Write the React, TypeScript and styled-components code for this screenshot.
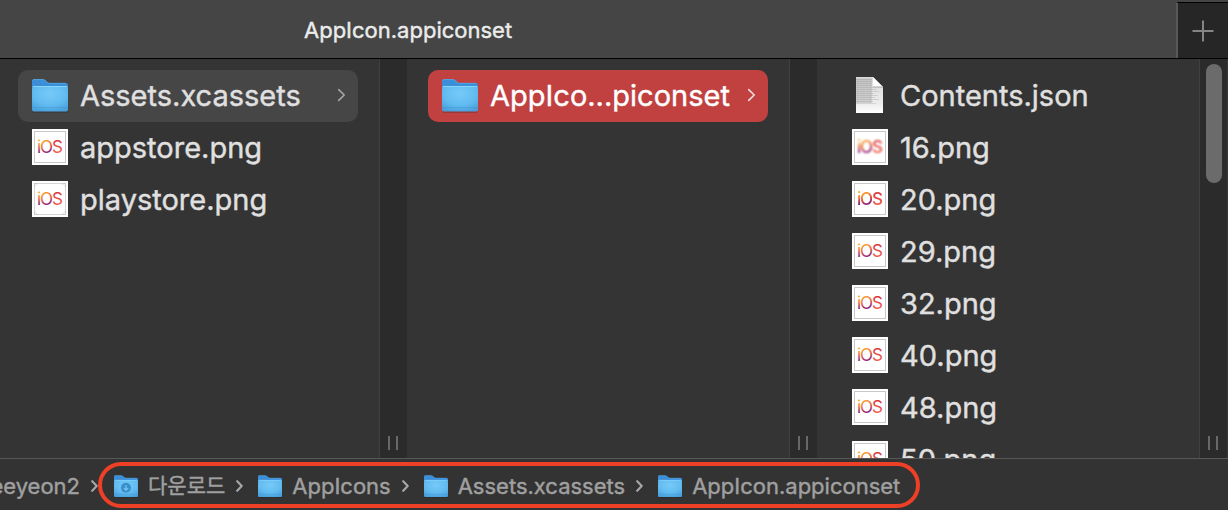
import React from 'react';
import styled, { createGlobalStyle } from 'styled-components';

const GlobalStyle = createGlobalStyle`
  * { box-sizing: border-box; }
  body {
    margin: 0;
    background: #333333;
    font-family: Inter, "Noto Sans CJK KR", sans-serif;
    -webkit-text-stroke: 0.4px currentColor;
  }
  button { font: inherit; color: inherit; background: none; border: 0; padding: 0; margin: 0; }
`;

const Window = styled.div`
  display: flex;
  flex-direction: column;
  height: 100vh;
  overflow: hidden;
`;

const TabBar = styled.header`
  display: flex;
  flex: none;
  height: 59px;
  background: #444544;
  border-bottom: 1px solid #000000;
`;

const TabTitle = styled.h1`
  flex: 1;
  margin: 0;
  padding: 1px 0 0 304px;
  font-size: 22px;
  line-height: 58px;
  font-weight: 400;
  color: #ececec;
  white-space: nowrap;
`;

const NewTab = styled.button`
  width: 52px;
  height: 56px;
  margin-top: 2px;
  display: flex;
  align-items: center;
  justify-content: center;
  background: #262626;
  border-left: 2px solid #585858;
  border-top: 1px solid #000000;
`;

const Columns = styled.main`
  flex: 1;
  min-height: 0;
  display: grid;
  grid-template-columns: 407fr 410fr 411fr;
  grid-template-rows: 100%;
`;

const Column = styled.section`
  display: flex;
  min-width: 0;
  background: #343434;
`;

const FileList = styled.ul<{ $inset: number }>`
  flex: 1;
  min-width: 0;
  margin: 0;
  padding: 11px 21px 0 ${(p) => p.$inset}px;
  list-style: none;
  overflow: hidden;
`;

const FileRow = styled.button<{ $tone?: 'muted' | 'accent' }>`
  display: flex;
  align-items: center;
  gap: 12px;
  width: 100%;
  height: 52px;
  padding: 0 12px 2px 14px;
  border-radius: 10px;
  text-align: left;
  color: ${(p) => (p.$tone === 'accent' ? '#ffffff' : '#e0e0e0')};
  background: ${(p) =>
    p.$tone === 'accent' ? '#c04140' : p.$tone === 'muted' ? '#464646' : 'transparent'};
`;

const FileName = styled.span`
  flex: 1;
  padding-top: 2px;
  font-size: 29px;
  line-height: 36px;
  white-space: nowrap;
`;

const Gutter = styled.div<{ $last?: boolean }>`
  flex: none;
  display: flex;
  flex-direction: column;
  align-items: center;
  justify-content: space-between;
  width: ${(p) => (p.$last ? 29 : 28)}px;
  padding: 5px 0 8px;
  background: #2b2b2b;
  border-left: 1px solid #404040;
  border-right: ${(p) => (p.$last ? '1px solid #383838' : 'none')};
`;

const Thumb = styled.div`
  width: 16px;
  height: 119px;
  margin-left: 1px;
  border-radius: 8px;
  background: #6b6b6b;
`;

const Grip = styled.div`
  width: 10px;
  height: 14px;
  margin-top: auto;
  margin-right: 1px;
  border: solid #686868;
  border-width: 0 2px;
`;

const PathBar = styled.nav`
  flex: none;
  display: flex;
  align-items: center;
  height: 52px;
  border-top: 1px solid #585858;
  background: #333333;
  color: #a0a0a0;
  font-size: 22px;
  line-height: 28px;
  white-space: nowrap;
`;

const Home = styled.div`
  display: flex;
  align-items: center;
  gap: 11px;
  padding-top: 2px;
`;

const HomeCrumb = styled.button`
  display: flex;
  justify-content: flex-end;
  width: 80px;
  overflow: hidden;
`;

const Trail = styled.div`
  display: flex;
  align-items: center;
  height: 46px;
  padding: 2px 16px 0 12px;
  border: 4px solid #ee4026;
  border-radius: 23px;
`;

const Crumb = styled.button`
  display: flex;
  align-items: center;
  gap: 10px;

  :lang(ko) {
    font-size: 21px;
  }
`;

const Separator = styled.span`
  display: flex;
  margin: 0 15px 0 11px;
`;

const Chevron = ({ color, thick }: { color: string; thick?: boolean }) =>
  thick ? (
    <svg width="7" height="12" viewBox="0 0 7 12" fill="none" aria-hidden="true">
      <path d="M1.2 1.2 5.7 6 1.2 10.8" stroke={color} strokeWidth="2.1" strokeLinecap="round" strokeLinejoin="round" />
    </svg>
  ) : (
    <svg width="9" height="14" viewBox="0 0 9 14" fill="none" aria-hidden="true">
      <path d="M1.7 1.6 7.2 7 1.7 12.4" stroke={color} strokeWidth="1.6" strokeLinecap="round" strokeLinejoin="round" />
    </svg>
  );

const FolderIcon = ({ size, download }: { size: number; download?: boolean }) => {
  const id = `folder-${size}${download ? '-d' : ''}`;
  return (
    <svg width={size} height={size} viewBox="0 -1 36 36" aria-hidden="true">
      <defs>
        <radialGradient id={id} cx="0.5" cy="0.3" r="0.75">
          <stop offset="0" stopColor="#76caf8" />
          <stop offset="0.6" stopColor="#62bbf0" />
          <stop offset="1" stopColor="#49a0dc" />
        </radialGradient>
      </defs>
      <path d="M0 3.3Q0 1.2 2 1.2H10.4Q12 1.2 13 2.1L15 4Q16.2 5 17.8 5H34Q36 5 36 7V12H0Z" fill="#3b8fd8" />
      <path d="M.4 2.8Q.8 1.5 2 1.5H10.4Q12 1.5 13 2.4L15 4.3Q16.2 5.3 17.8 5.3H34" fill="none" stroke="#54a9e6" strokeWidth=".8" />
      <path d="M1 34H35" stroke="#222222" strokeOpacity=".5" strokeWidth="1.2" />
      <rect y="8" width="36" height="25.4" rx="1.8" fill={`url(#${id})`} />
      <path d="M1 8.5H35" stroke="#8ad6fb" strokeWidth="1" />
      <path d="M0 29.6H36" stroke="#3d93d0" strokeOpacity=".4" strokeWidth="1" />
      {download && (
        <g fill="none">
          <circle cx="18" cy="19.5" r="7.5" fill="#398fca" />
          <path d="M18 15.5V23M14.8 20.2 18 23.4 21.2 20.2" stroke="#73c5f2" strokeWidth="1.8" />
        </g>
      )}
    </svg>
  );
};

const ImageIcon = ({ id, soft = 0, rounded }: { id: string; soft?: number; rounded?: boolean }) => (
  <svg width="36" height="36" viewBox="0 0 36 36" aria-hidden="true">
    <defs>
      <linearGradient id={`${id}-i`} x1="0" y1="0" x2="0" y2="1">
        <stop offset="0.25" stopColor="#f6b43c" />
        <stop offset="0.5" stopColor="#e0604a" />
        <stop offset="0.75" stopColor="#7a2382" />
      </linearGradient>
      <linearGradient id={`${id}-o`} x1="0.35" y1="0.15" x2="0.55" y2="0.85">
        <stop offset="0.15" stopColor="#f49a35" />
        <stop offset="0.5" stopColor="#e4573f" />
        <stop offset="0.85" stopColor="#8f2478" />
      </linearGradient>
      <linearGradient id={`${id}-s`} x1="0" y1="0" x2="0" y2="1">
        <stop offset="0.2" stopColor="#d93a3c" />
        <stop offset="0.8" stopColor="#f2604d" />
      </linearGradient>
      <filter id={`${id}-f`}>
        <feGaussianBlur stdDeviation={soft} />
      </filter>
    </defs>
    <rect width="36" height="36" fill="#ffffff" />
    <rect x="2.5" y="2.5" width="31" height="31" fill="#ffffff" stroke="#c8c8c8" />
    {rounded && <rect x="2.5" y="2.5" width="31" height="31" rx="5" fill="none" stroke="#dcdcdc" strokeWidth=".7" />}
    <g
      fontFamily="Inter, sans-serif"
      fontSize="17"
      fontWeight={soft ? 500 : 400}
      filter={soft ? `url(#${id}-f)` : undefined}
    >
      <text x="5" y="24" fill={`url(#${id}-i)`}>i</text>
      <text x="8" y="24" fill={`url(#${id}-o)`}>O</text>
      <text x="20" y="24" fill={`url(#${id}-s)`}>S</text>
    </g>
  </svg>
);

const JsonIcon = () => (
  <svg width="36" height="36" viewBox="0 0 36 36" aria-hidden="true">
    <defs>
      <linearGradient id="page" x1="0" y1="0" x2="0" y2="1">
        <stop offset="0" stopColor="#d9d9d9" />
        <stop offset="0.75" stopColor="#ededed" />
        <stop offset="1" stopColor="#ffffff" />
      </linearGradient>
    </defs>
    <path d="M4 0H21L31 10V36H4Z" fill="url(#page)" />
    <g stroke="#8c8c8c" strokeOpacity=".4" strokeWidth=".8">
      <path d="M4.5 2.5H20M4.5 4.5H20M4.5 6.5H20M4.5 8.5H20M4.5 10.5H21" strokeDasharray="2.6 .5" />
      <path d="M4.5 12.5H24M4.5 14.5H27M4.5 16.5H22M4.5 18.5H26M4.5 20.5H23M4.5 22.5H27M4.5 24.5H21M4.5 26.5H24" strokeDasharray="3 .6 1.8 .5" />
    </g>
    <path d="M4 1.5H20V26H4Z" fill="#9a9a9a" fillOpacity=".36" />
    <path d="M21 0V10H31Z" fill="#ffffff" />
    <path d="M21 10H31" stroke="#a4a4a4" />
  </svg>
);

const images = [
  { name: '16.png', soft: 0.8 },
  { name: '20.png', soft: 0.5 },
  { name: '29.png' },
  { name: '32.png' },
  { name: '40.png' },
  { name: '48.png' },
  { name: '50.png' },
];

const trail = [
  { name: '다운로드', lang: 'ko' },
  { name: 'AppIcons', lang: 'en' },
  { name: 'Assets.xcassets', lang: 'en' },
  { name: 'AppIcon.appiconset', lang: 'en' },
];

export default function App() {
  return (
    <Window>
      <GlobalStyle />
      <TabBar>
        <TabTitle>AppIcon.appiconset</TabTitle>
        <NewTab aria-label="New tab">
          <svg width="22" height="22" viewBox="0 0 22 22" aria-hidden="true">
            <path d="M11 .5V21.5M.5 11H21.5" stroke="#858585" strokeWidth="2" />
          </svg>
        </NewTab>
      </TabBar>
      <Columns>
        <Column>
          <FileList $inset={18}>
            <li>
              <FileRow $tone="muted">
                <FolderIcon size={36} />
                <FileName>Assets.xcassets</FileName>
                <Chevron color="#a6a6a6" />
              </FileRow>
            </li>
            <li>
              <FileRow>
                <ImageIcon id="appstore" />
                <FileName>appstore.png</FileName>
              </FileRow>
            </li>
            <li>
              <FileRow>
                <ImageIcon id="playstore" rounded />
                <FileName>playstore.png</FileName>
              </FileRow>
            </li>
          </FileList>
          <Gutter>
            <Grip />
          </Gutter>
        </Column>
        <Column>
          <FileList $inset={21}>
            <li>
              <FileRow $tone="accent">
                <FolderIcon size={36} />
                <FileName>AppIco...piconset</FileName>
                <Chevron color="#f4dcdc" />
              </FileRow>
            </li>
          </FileList>
          <Gutter>
            <Grip />
          </Gutter>
        </Column>
        <Column>
          <FileList $inset={21}>
            <li>
              <FileRow>
                <JsonIcon />
                <FileName>Contents.json</FileName>
              </FileRow>
            </li>
            {images.map((image) => (
              <li key={image.name}>
                <FileRow>
                  <ImageIcon id={`img-${parseInt(image.name, 10)}`} soft={image.soft} />
                  <FileName>{image.name}</FileName>
                </FileRow>
              </li>
            ))}
          </FileList>
          <Gutter $last>
            <Thumb />
            <Grip />
          </Gutter>
        </Column>
      </Columns>
      <PathBar aria-label="Path">
        <Home>
          <HomeCrumb>eeyeon2</HomeCrumb>
          <Chevron color="#a8a8a8" thick />
        </Home>
        <Trail>
          {trail.map(({ name, lang }, index) => (
            <React.Fragment key={name}>
              {index > 0 && (
                <Separator>
                  <Chevron color="#a8a8a8" thick />
                </Separator>
              )}
              <Crumb>
                <FolderIcon size={24} download={index === 0} />
                <span lang={lang}>{name}</span>
              </Crumb>
            </React.Fragment>
          ))}
        </Trail>
      </PathBar>
    </Window>
  );
}
